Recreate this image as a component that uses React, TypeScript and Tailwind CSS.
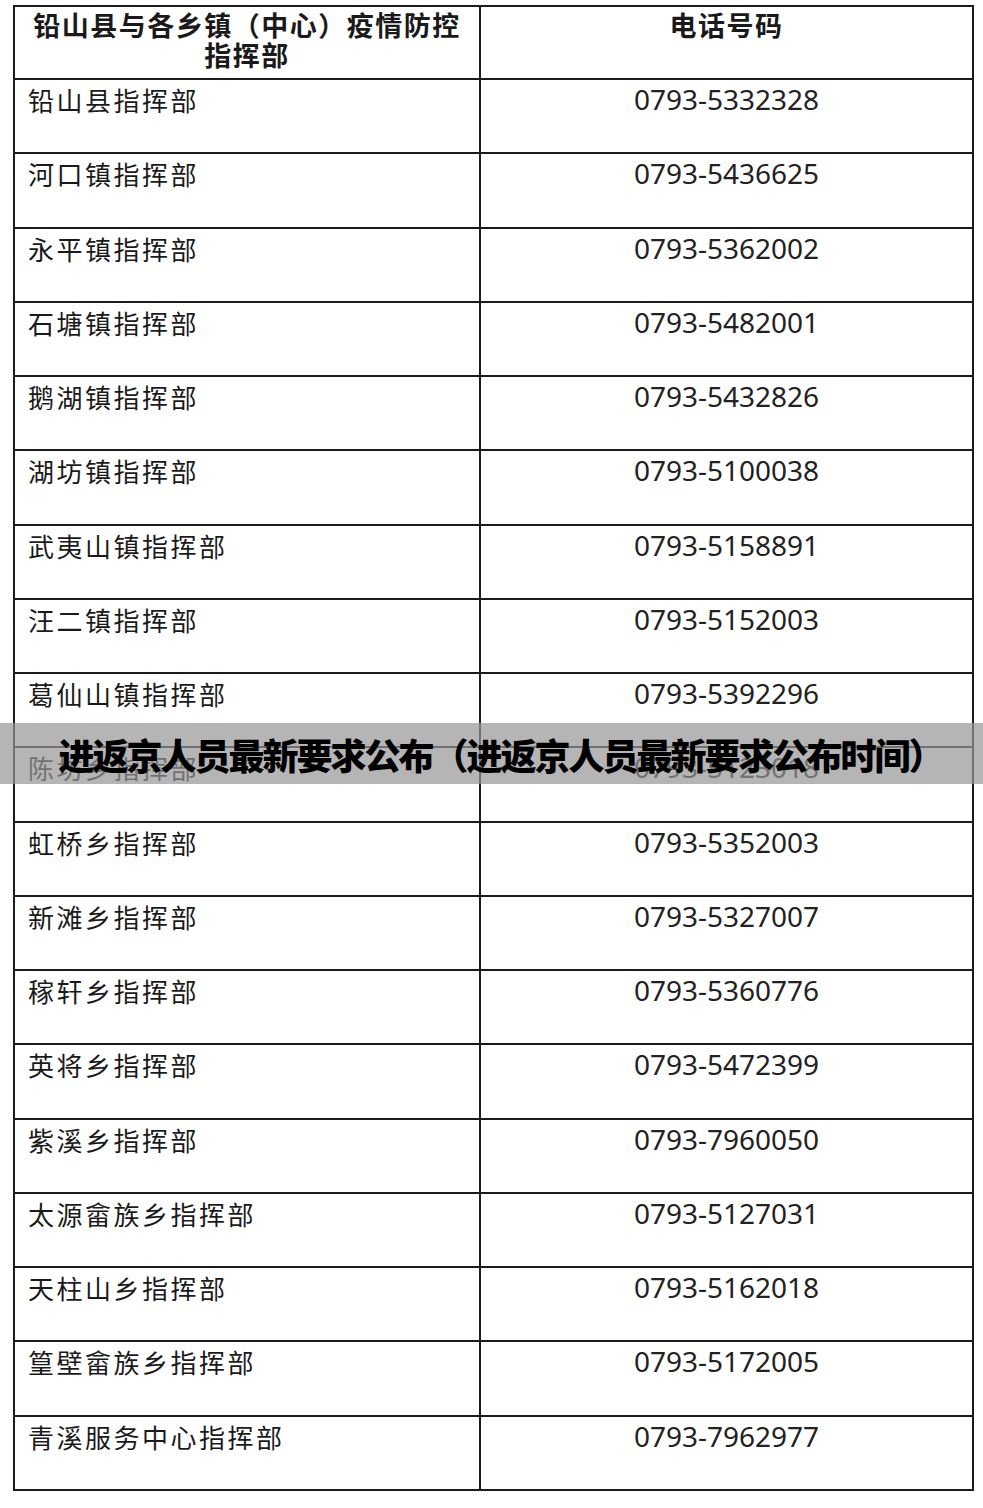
import React from "react";

const rows: [string, string][] = [
  ["铅山县指挥部", "0793-5332328"],
  ["河口镇指挥部", "0793-5436625"],
  ["永平镇指挥部", "0793-5362002"],
  ["石塘镇指挥部", "0793-5482001"],
  ["鹅湖镇指挥部", "0793-5432826"],
  ["湖坊镇指挥部", "0793-5100038"],
  ["武夷山镇指挥部", "0793-5158891"],
  ["汪二镇指挥部", "0793-5152003"],
  ["葛仙山镇指挥部", "0793-5392296"],
  ["陈坊乡指挥部", "0793-5123018"],
  ["虹桥乡指挥部", "0793-5352003"],
  ["新滩乡指挥部", "0793-5327007"],
  ["稼轩乡指挥部", "0793-5360776"],
  ["英将乡指挥部", "0793-5472399"],
  ["紫溪乡指挥部", "0793-7960050"],
  ["太源畲族乡指挥部", "0793-5127031"],
  ["天柱山乡指挥部", "0793-5162018"],
  ["篁壁畲族乡指挥部", "0793-5172005"],
  ["青溪服务中心指挥部", "0793-7962977"],
];

const cjk = { fontFamily: '"Noto Sans CJK SC", sans-serif' };
const num = { fontFamily: '"Noto Sans", "Open Sans", sans-serif' };

export default function App() {
  return (
    <div className="relative w-[983px] h-[1508px] bg-white overflow-hidden">
      <div className="pl-[13px] pt-[5px]">
        <div className="w-[961px] border-2 border-[#1c1c1c] text-[#1a1a1a]">
          <div className="grid grid-cols-[466px_1fr] h-[71px]">
            <div
              className="border-r-2 border-[#1c1c1c] text-center text-[27px] leading-[30px] font-bold tracking-[1.5px] pt-[3px]"
              style={cjk}
            >
              <div>铅山县与各乡镇（中心）疫情防控</div>
              <div>指挥部</div>
            </div>
            <div
              className="text-center text-[27px] leading-[30px] font-bold tracking-[1.5px] pt-[3px]"
              style={cjk}
            >
              电话号码
            </div>
          </div>
          {rows.map(([name, phone]) => (
            <div
              key={name}
              className="grid grid-cols-[466px_1fr] h-[74.26px] border-t-2 border-[#1c1c1c]"
            >
              <div
                className="border-r-2 border-[#1c1c1c] pl-[13px] pt-[5px] text-[26px] leading-[30px] tracking-[2.5px]"
                style={cjk}
              >
                {name}
              </div>
              <div
                className="text-center text-[28px] leading-[32px] pt-[3px] text-[#222]"
                style={num}
              >
                {phone}
              </div>
            </div>
          ))}
        </div>
      </div>
      <div className="absolute left-0 right-0 top-[723px] h-[61px] bg-[rgba(150,150,150,0.7)] flex items-center justify-center pl-[18px]">
        <span
          className="text-black text-[36px] leading-[40px] font-black tracking-[-2px]"
          style={cjk}
        >
          进返京人员最新要求公布（进返京人员最新要求公布时间）
        </span>
      </div>
    </div>
  );
}
